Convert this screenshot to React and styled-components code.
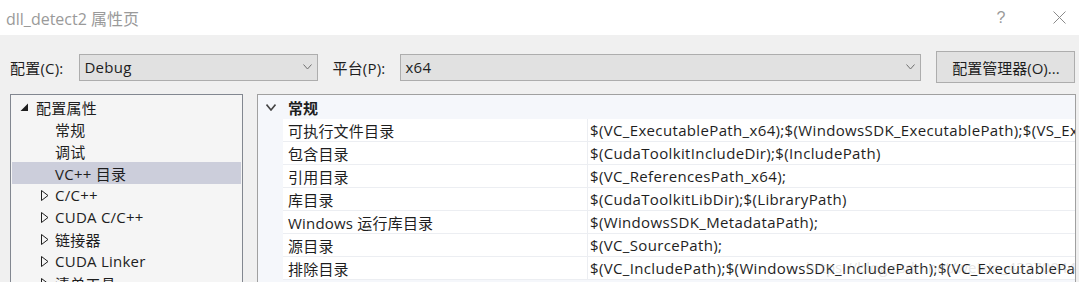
import React from "react";
import styled, { createGlobalStyle } from "styled-components";

const Global = createGlobalStyle`
  html, body { margin: 0; padding: 0; }
  body {
    background: #f0f0f0;
    font-family: "Open Sans", "Noto Sans CJK SC", sans-serif;
    color: #1e1e1e;
    overflow: hidden;
  }
`;

const Window = styled.div`
  width: 1079px;
  height: 282px;
  display: flex;
  flex-direction: column;
  overflow: hidden;
  position: relative;
  background: #f0f0f0;
`;

const TitleBar = styled.div`
  height: 35px;
  flex: none;
  background: #ffffff;
  display: flex;
  align-items: center;
  padding-left: 6px;
`;

const Title = styled.div`
  flex: 1;
  font-size: 16px;
  color: #9a9a9a;
  white-space: nowrap;
`;

const TitleButton = styled.div`
  width: ${(p) => p.$w}px;
  margin-right: ${(p) => p.$mr || 0}px;
  height: 35px;
  display: flex;
  align-items: center;
  justify-content: center;
  color: #9a9a9a;
  font-size: 16px;
  font-family: "Liberation Sans", sans-serif;
`;

const Toolbar = styled.div`
  flex: none;
  display: flex;
  align-items: center;
  padding: 16px 0 11px 10px;
`;

const Label = styled.span`
  font-size: 15px;
  letter-spacing: 0.2px;
  white-space: nowrap;
  margin-right: ${(p) => p.$mr}px;
`;

const Combo = styled.div`
  width: ${(p) => p.$w}px;
  height: 27px;
  box-sizing: border-box;
  border: 1px solid #adadad;
  background: #e1e1e1;
  display: flex;
  align-items: center;
  padding: 0 5px 0 4px;
  font-size: 15px;
  letter-spacing: 0.3px;
  margin-right: ${(p) => p.$mr}px;
`;

const ComboText = styled.span`
  flex: 1;
`;

const Button = styled.div`
  width: 139px;
  height: 32px;
  box-sizing: border-box;
  border: 1px solid #adadad;
  background: #e1e1e1;
  display: flex;
  align-items: center;
  justify-content: center;
  font-size: 15px;
  white-space: nowrap;
`;

const Main = styled.div`
  flex: 1;
  display: flex;
  gap: 14px;
  padding: 0 3px 0 10px;
  min-height: 0;
`;

const TreePanel = styled.div`
  width: 233px;
  flex: none;
  box-sizing: border-box;
  border: 1px solid #828790;
  border-bottom: none;
  background: #f5f5f5;
  padding: 1px 1px 0 1px;
  overflow: hidden;
`;

const TreeRow = styled.div`
  height: 22px;
  display: flex;
  align-items: center;
  padding-left: ${(p) => 6 + p.$level * 19}px;
  background: ${(p) => (p.$selected ? "#cccedb" : "transparent")};
  font-size: 15px;
  letter-spacing: 0.25px;
  white-space: nowrap;
`;

const Arrow = styled.span`
  width: 18px;
  flex: none;
  display: flex;
  align-items: center;
`;

const GridPanel = styled.div`
  flex: 1;
  box-sizing: border-box;
  border: 1px solid #a0a0a0;
  border-bottom: none;
  background: #f5f7fb;
  overflow: hidden;
  min-width: 0;
`;

const GroupHeader = styled.div`
  height: 24px;
  display: flex;
  align-items: center;
  font-size: 15px;
  font-weight: bold;
`;

const Gutter = styled.span`
  width: 25px;
  flex: none;
  display: flex;
  justify-content: center;
  align-items: center;
`;

const HeaderText = styled.span`
  padding-left: 5px;
`;

const PropRow = styled.div`
  display: flex;
  height: 23px;
`;

const RowBody = styled.div`
  flex: 1;
  display: flex;
  background: #ffffff;
  border-bottom: 1px solid #eceef2;
  min-width: 0;
`;

const NameCell = styled.div`
  width: 305px;
  flex: none;
  box-sizing: border-box;
  border-right: 1px solid #eceef2;
  padding-left: 5px;
  display: flex;
  align-items: center;
  font-size: 15px;
  letter-spacing: 0.2px;
  white-space: nowrap;
`;

const ValueCell = styled.div`
  flex: 1;
  padding-left: 2px;
  display: flex;
  align-items: center;
  font-size: 15px;
  letter-spacing: 0.35px;
  white-space: nowrap;
  overflow: hidden;
  min-width: 0;
`;

const Watermark = styled.div`
  position: absolute;
  left: 806px;
  top: 257px;
  font-size: 15px;
  color: rgba(170, 170, 170, 0.3);
  white-space: nowrap;
  pointer-events: none;
`;

const ChevronDown = ({ w = 9, h = 5, color = "#6d6d6d", sw = 1 }) => (
  <svg width={w} height={h + 1} viewBox={`0 0 ${w} ${h + 1}`}>
    <polyline
      points={`0.5,0.5 ${w / 2},${h} ${w - 0.5},0.5`}
      fill="none"
      stroke={color}
      strokeWidth={sw}
    />
  </svg>
);

const Expanded = () => (
  <svg width="9" height="9" viewBox="0 0 9 9" style={{ marginLeft: 2 }}>
    <polygon points="8,0.5 8,8 0.5,8" fill="#1e1e1e" />
  </svg>
);

const Collapsed = () => (
  <svg width="8" height="11" viewBox="0 0 8 11" style={{ marginLeft: 4 }}>
    <path d="M0.5,0.5 L7,5.5 L0.5,10.5 Z" fill="none" stroke="#1e1e1e" strokeWidth="1" />
  </svg>
);

const tree = [
  { label: "配置属性", level: 0, arrow: "open" },
  { label: "常规", level: 1 },
  { label: "调试", level: 1 },
  { label: "VC++ 目录", level: 1, selected: true },
  { label: "C/C++", level: 1, arrow: "closed" },
  { label: "CUDA C/C++", level: 1, arrow: "closed" },
  { label: "链接器", level: 1, arrow: "closed" },
  { label: "CUDA Linker", level: 1, arrow: "closed" },
  { label: "清单工具", level: 1, arrow: "closed" },
];

const props = [
  ["可执行文件目录", "$(VC_ExecutablePath_x64);$(WindowsSDK_ExecutablePath);$(VS_ExecutablePath);$(MSBuild_ExecutablePath);$(SystemRoot)\\SysWow64;$(FxCopDir);$(PATH);"],
  ["包含目录", "$(CudaToolkitIncludeDir);$(IncludePath)"],
  ["引用目录", "$(VC_ReferencesPath_x64);"],
  ["库目录", "$(CudaToolkitLibDir);$(LibraryPath)"],
  ["Windows 运行库目录", "$(WindowsSDK_MetadataPath);"],
  ["源目录", "$(VC_SourcePath);"],
  ["排除目录", "$(VC_IncludePath);$(WindowsSDK_IncludePath);$(VC_ExecutablePath_x64);$(VC_LibraryPath_x64);"],
];

export default function App() {
  return (
    <Window>
      <Global />
      <TitleBar>
        <Title>dll_detect2 属性页</Title>
        <TitleButton $w={40} $mr={18}>?</TitleButton>
        <TitleButton $w={40}>
          <svg width="13" height="13" viewBox="0 0 13 13">
            <path d="M0.5,0.5 L12.5,12.5 M12.5,0.5 L0.5,12.5" stroke="#8a8a8a" strokeWidth="1" />
          </svg>
        </TitleButton>
      </TitleBar>
      <Toolbar>
        <Label $mr={16}>配置(C):</Label>
        <Combo $w={239} $mr={14}>
          <ComboText>Debug</ComboText>
          <ChevronDown w={9} h={5} color="#707070" />
        </Combo>
        <Label $mr={15}>平台(P):</Label>
        <Combo $w={521} $mr={15}>
          <ComboText>x64</ComboText>
          <ChevronDown w={9} h={5} color="#707070" />
        </Combo>
        <Button>配置管理器(O)...</Button>
      </Toolbar>
      <Main>
        <TreePanel>
          {tree.map((t) => (
            <TreeRow key={t.label} $level={t.level} $selected={t.selected}>
              <Arrow>
                {t.arrow === "open" && <Expanded />}
                {t.arrow === "closed" && <Collapsed />}
              </Arrow>
              {t.label}
            </TreeRow>
          ))}
        </TreePanel>
        <GridPanel>
          <GroupHeader>
            <Gutter>
              <ChevronDown w={10} h={6} color="#444" sw={1.6} />
            </Gutter>
            <HeaderText>常规</HeaderText>
          </GroupHeader>
          {props.map(([name, value]) => (
            <PropRow key={name}>
              <Gutter />
              <RowBody>
                <NameCell>{name}</NameCell>
                <ValueCell>{value}</ValueCell>
              </RowBody>
            </PropRow>
          ))}
        </GridPanel>
      </Main>
      <Watermark>https://blog.csdn.net/weixin_43270044</Watermark>
    </Window>
  );
}
